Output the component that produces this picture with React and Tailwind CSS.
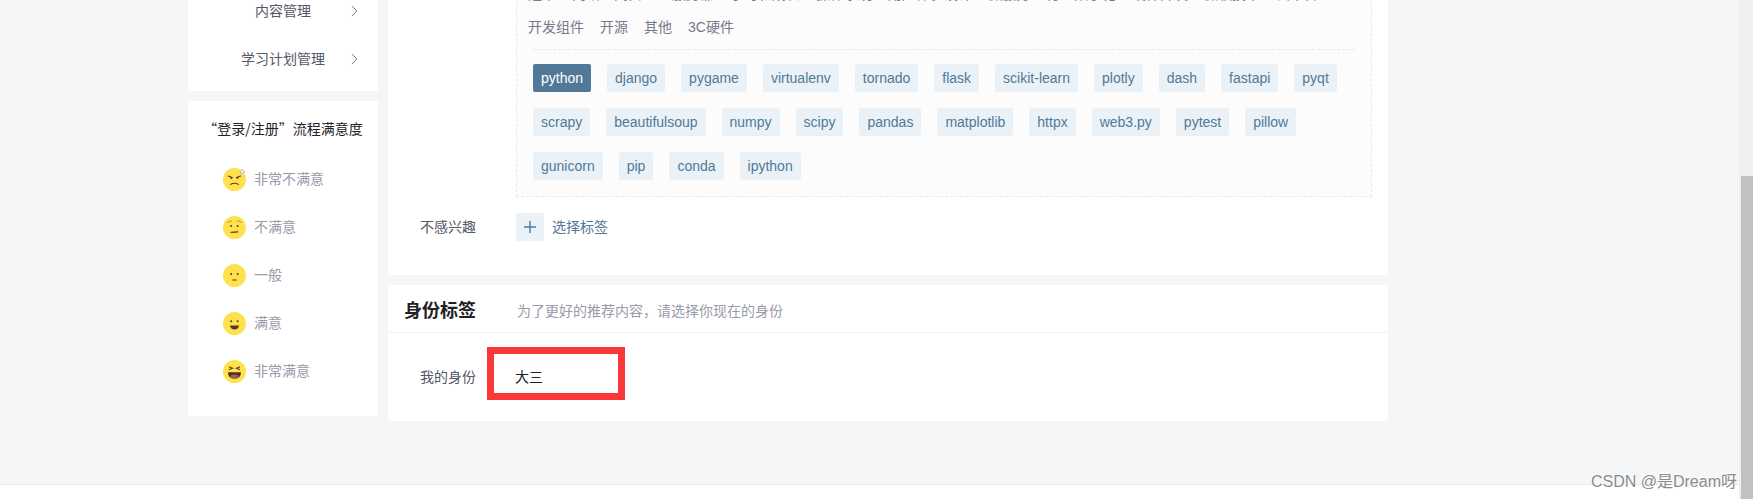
import React, {useState} from 'react';
import clsx from "clsx";

const menus = ['内容管理', '学习计划管理']

const categories = [
	'运维', '网络空间安全', '服务器', '学习和成长', '操作系统', '用户体验设计', '微服务',
	'行业数字化', '硬件开发', '微软技术', '云平台', '开发组件', '开源', '其他', '3C硬件',
]

const tags = [
	'python', 'django', 'pygame', 'virtualenv', 'tornado', 'flask', 'scikit-learn', 'plotly',
	'dash', 'fastapi', 'pyqt', 'scrapy', 'beautifulsoup', 'numpy', 'scipy', 'pandas', 'matplotlib',
	'httpx', 'web3.py', 'pytest', 'pillow', 'gunicorn', 'pip', 'conda', 'ipython',
]

const Face = ({children}) => (
		<svg className="size-[23px] shrink-0" viewBox="0 0 23 23" fill="none" strokeLinecap="round" aria-hidden="true">
			<circle cx="11.5" cy="11.5" r="11.5" fill="#ffe14d"/>
			{children}
		</svg>
)

const Eyes = () => (
		<>
			<circle cx="8.2" cy="10" r="1" fill="#5b3a1e"/>
			<circle cx="14.6" cy="10" r="1" fill="#5b3a1e"/>
		</>
)

const moods = [
	{
		label: '非常不满意',
		face: (
				<Face>
					<path d="M5.2 8 9.4 9.6M17.6 8 13.4 9.6" stroke="#5b3a1e" strokeWidth="1.1"/>
					<circle cx="8.2" cy="10" r=".9" fill="#5b3a1e"/>
					<circle cx="14.6" cy="10" r=".9" fill="#5b3a1e"/>
					<path d="M7.6 16.4Q11.5 14 15.4 16.4" stroke="#5b3a1e" strokeWidth="1.1"/>
					<circle cx="19.2" cy="3.8" r="1.9" fill="#f7f3e6" stroke="#b9ad9d" strokeWidth="1" strokeDasharray="2 1"/>
				</Face>
		),
	},
	{
		label: '不满意',
		face: (
				<Face>
					<Eyes/>
					<path d="M4.6 6.4Q6 5 8.4 5M14.6 5Q17 5 18.4 6.4" stroke="#b08a3a" strokeWidth="1"/>
					<path d="M8.2 16.4 14.6 15.8" stroke="#5b3a1e" strokeWidth="1.2"/>
				</Face>
		),
	},
	{
		label: '一般',
		face: (
				<Face>
					<Eyes/>
					<path d="M9.8 16H13.2" stroke="#5b3a1e" strokeWidth="1.1"/>
				</Face>
		),
	},
	{
		label: '满意',
		face: (
				<Face>
					<circle cx="8.2" cy="9.2" r="1" fill="#5b3a1e"/>
					<circle cx="14.6" cy="9.2" r="1" fill="#5b3a1e"/>
					<path d="M7 13.6H16Q15.4 17.6 11.5 17.6T7 13.6Z" fill="#5b3a1e"/>
				</Face>
		),
	},
	{
		label: '非常满意',
		face: (
				<Face>
					<path d="M6.4 6.9 9.6 8.2 6.4 9.6M16.6 6.9 13.4 8.2 16.6 9.6" stroke="#5b3a1e" strokeWidth="1.1"/>
					<path d="M5 12.2H18Q18 18.6 11.5 18.6T5 12.2Z" fill="#5b2a24"/>
					<ellipse cx="11.5" cy="16.4" rx="4" ry="2" fill="#8f6355"/>
				</Face>
		),
	},
]

const SideBar = () => {
	return (
			<aside className="w-[190px] shrink-0">
				<nav className="rounded-b-xs bg-white pt-[9px] pb-2">
					{menus.map(menu => (
							<a key={menu} href="#" className="relative block text-center text-sm/[48px] text-[#555666]">
								{menu}
								<svg className="absolute top-[18px] right-5 h-3 w-[7px]" viewBox="0 0 7 12" fill="none"
								     stroke="#777888" aria-hidden="true">
									<path d="M.8 1 6 6 .8 11"/>
								</svg>
							</a>
					))}
				</nav>
				<section className="mt-2.5 rounded-xs bg-white pb-[21px]">
					<h3 className="text-center font-['Noto_Sans_CJK_SC',sans-serif] text-sm/[54px] whitespace-nowrap text-[#222226]">
						“登录/注册”流程满意度
					</h3>
					{moods.map(({label, face}) => (
							<button key={label} type="button"
							        className="flex h-12 w-full items-center gap-2 pl-[35px] text-sm text-[#999aaa]">
								{face}
								{label}
							</button>
					))}
				</section>
			</aside>
	)
}

const TagBox = () => {

	const [selected, setSelected] = useState('python')

	return (
			<div className="min-w-0 flex-1 border border-t-0 border-dashed border-[#e8e8ed] bg-[#fcfcfc] pb-4">
				<div className="flex flex-wrap gap-x-4 px-[11px] pb-[5px]">
					{categories.map(category => (
							<button key={category} type="button" className="text-sm/[33px] text-[#777888]">{category}</button>
					))}
				</div>
				<div className="mx-4 flex flex-wrap gap-4 border-t border-dashed border-[#e8e8ed] pt-3.5">
					{tags.map(tag => (
							<button key={tag} type="button" onClick={() => setSelected(tag)}
							        className={clsx("rounded-xs px-2 text-sm/[28px]",
									        tag === selected ? "bg-[#507999] text-white" : "bg-[#ebf2f7] text-[#507999]")}>
								{tag}
							</button>
					))}
				</div>
			</div>
	)
}

const App = () => {
	return (
			<div className="relative flex min-h-screen overflow-hidden bg-[#f4f6f8] font-['Liberation_Sans','Noto_Sans_CJK_SC',sans-serif]">
				<div className="flex min-w-0 flex-1 flex-col">
					<div className="mx-auto -mt-[22px] flex w-full max-w-[1363px] gap-2.5 pb-[63px]">
						<SideBar/>
						<main className="max-w-[1000px] min-w-0 flex-1">
							<section className="bg-white pr-4 pb-[34px]">
								<div className="flex pl-32">
									<TagBox/>
								</div>
								<div className="mt-4 flex items-center">
									<div className="w-32 pl-8 text-sm text-[#555666]">不感兴趣</div>
									<button type="button" className="flex items-center gap-2 text-sm text-[#507999]">
										<span className="flex size-7 items-center justify-center bg-[#ebf2f7]">
											<svg className="size-3" viewBox="0 0 12 12" stroke="#507999" strokeWidth="1.4" aria-hidden="true">
												<path d="M6 0V12M0 6H12"/>
											</svg>
										</span>
										选择标签
									</button>
								</div>
							</section>

							<section className="mt-2.5 bg-white pb-[21px]">
								<div className="flex h-12 items-center border-b border-[#f0f0f2] pt-1 pl-4">
									<h2 className="w-[113px] text-lg font-bold text-[#222226]">身份标签</h2>
									<p className="text-sm text-[#999aaa]">为了更好的推荐内容，请选择你现在的身份</p>
								</div>
								<div className="flex items-stretch pt-3.5 pl-8">
									<div className="flex w-[67px] items-center pt-1.5 text-sm text-[#555666]">我的身份</div>
									<div className="flex h-[53px] w-[138px] items-center border-7 border-[#fb3838] pt-1.5 pl-[21px] text-sm text-[#222226]">
										大三
									</div>
								</div>
							</section>
						</main>
					</div>
					<footer className="flex-1 border-t border-[#e8eaec] bg-white"/>
				</div>

				<div className="flex w-3.5 flex-col bg-[#f0f0f0] pl-0.5">
					<div className="mt-44 flex-1 bg-[#c1c1c1]"/>
				</div>

				<span className="absolute right-4 bottom-[5px] text-base text-[#8c8c8c] text-shadow-[-1px_-1px_0_#ffffff]">
					CSDN @是Dream呀
				</span>
			</div>
	);
};

export default App;
